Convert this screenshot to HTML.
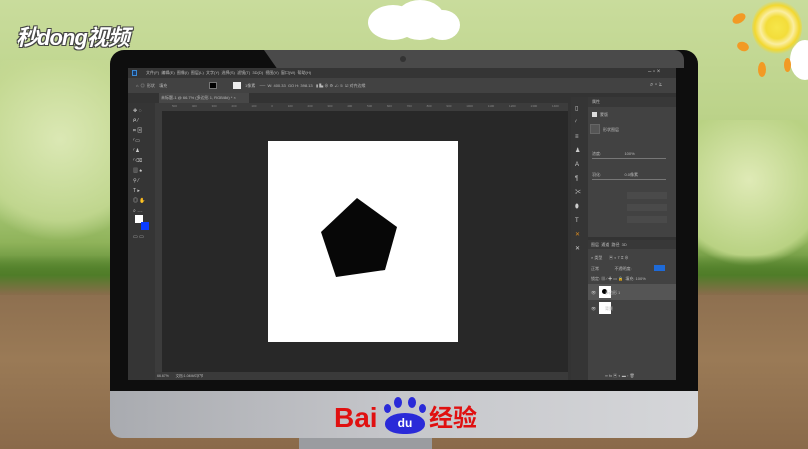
<!DOCTYPE html>
<html><head><meta charset="utf-8"><style>
*{margin:0;padding:0;box-sizing:border-box}
body{width:808px;height:449px;overflow:hidden;position:relative;font-family:"Liberation Sans","Noto Sans CJK SC",sans-serif;
background:linear-gradient(180deg,#c9dc9c 0%,#bcd38a 25%,#a9c878 45%,#8fb35a 54%,#5f8c35 60%,#8e7050 66%,#9a7a56 80%,#8a6a4a 100%)}
.a{position:absolute}
.t{color:#bbb;font-size:4px;white-space:nowrap;overflow:hidden}
</style></head><body>
<!-- bokeh -->
<div class="a" style="left:0;top:60px;width:120px;height:200px;background:radial-gradient(circle at 50% 40%,#e4eec0 0,#c6da94 60%,transparent 75%);opacity:.8"></div>
<div class="a" style="left:690px;top:120px;width:118px;height:150px;background:radial-gradient(circle at 50% 40%,#dfeab6 0,#b9d283 70%,transparent 80%)"></div>
<div class="a" style="left:0;top:255px;width:808px;height:40px;background:linear-gradient(180deg,transparent,#4f7d28 50%,#8a6c4c)"></div>
<!-- clouds -->
<div class="a" style="left:368px;top:5px;width:50px;height:35px;background:#fff;border-radius:50%"></div>
<div class="a" style="left:395px;top:0;width:50px;height:40px;background:#fff;border-radius:50%"></div>
<div class="a" style="left:425px;top:10px;width:35px;height:30px;background:#fff;border-radius:50%"></div>
<div class="a" style="left:790px;top:40px;width:30px;height:40px;background:#fff;border-radius:50%"></div>
<!-- sun -->
<div class="a" style="left:752px;top:0;width:50px;height:55px;border-radius:50%;background:radial-gradient(circle,#f6e64a 0,#f3dd3a 30%,#fbeea0 45%,#f2d830 60%,transparent 72%)"></div>
<div class="a" style="left:732px;top:14px;width:14px;height:9px;background:#f29a24;border-radius:50%;transform:rotate(-30deg)"></div>
<div class="a" style="left:737px;top:42px;width:12px;height:9px;background:#f29a24;border-radius:50%;transform:rotate(20deg)"></div>
<div class="a" style="left:758px;top:62px;width:8px;height:15px;background:#f29a24;border-radius:50%"></div>
<div class="a" style="left:784px;top:58px;width:7px;height:14px;background:#f29a24;border-radius:50%"></div>
<!-- logo -->
<div class="a" style="left:16px;top:20px;font-size:22px;font-weight:bold;font-style:italic;color:#fff;text-shadow:1px 1px 0 #444,-1px -1px 0 #444,1px -1px 0 #444,-1px 1px 0 #444;letter-spacing:-1px">秒dong视频</div>
<!-- monitor -->
<div class="a" style="left:110px;top:50px;width:588px;height:345px;background:#0e0e0e;border-radius:14px 14px 0 0"></div>
<div class="a" style="left:264px;top:50px;width:420px;height:18px;background:#4a4a4a;clip-path:polygon(0 0,100% 0,100% 100%,3% 100%);border-radius:0 10px 0 0"></div>
<div class="a" style="left:400px;top:56px;width:6px;height:6px;border-radius:50%;background:#333"></div>
<div class="a" style="left:110px;top:391px;width:588px;height:47px;background:linear-gradient(90deg,#a9abb0,#c6c7cb 50%,#d5d6d9);border-radius:0 0 12px 12px"></div>
<div class="a" style="left:299px;top:438px;width:133px;height:11px;background:#9a9ca0"></div>
<div class="a" style="left:334px;top:403px;font-size:28px;font-weight:bold;color:#e01010;line-height:30px">Bai</div>
<div class="a" style="left:385px;top:413px;width:40px;height:21px;border-radius:50% 50% 45% 45%;background:#2a2ad8;color:#fff;font-size:12px;font-weight:bold;text-align:center;line-height:21px">du</div>
<div class="a" style="left:394px;top:397px;width:8px;height:11px;border-radius:50%;background:#2a2ad8"></div>
<div class="a" style="left:408px;top:397px;width:8px;height:11px;border-radius:50%;background:#2a2ad8"></div>
<div class="a" style="left:384px;top:404px;width:7px;height:9px;border-radius:50%;background:#2a2ad8"></div>
<div class="a" style="left:419px;top:404px;width:7px;height:9px;border-radius:50%;background:#2a2ad8"></div>
<div class="a" style="left:429px;top:405px;font-size:24px;font-weight:bold;color:#e01010;line-height:28px">经验</div>
<!-- PS window -->
<div class="a" style="left:128px;top:68px;width:548px;height:312px;background:#3a3a3a"></div>
<div class="a" style="left:128px;top:68px;width:548px;height:10px;background:#353535"></div>
<div class="a" style="left:132px;top:70px;width:5px;height:6px;background:#1c3c6a;border:1px solid #3a8bd6"></div>
<div class="a t" style="left:146px;top:70px">文件(F) &nbsp;编辑(E) &nbsp;图像(I) &nbsp;图层(L) &nbsp;文字(Y) &nbsp;选择(S) &nbsp;滤镜(T) &nbsp;3D(D) &nbsp;视图(V) &nbsp;窗口(W) &nbsp;帮助(H)</div>
<div class="a t" style="left:648px;top:69px;font-size:6px">– ▫ ×</div>
<div class="a" style="left:128px;top:78px;width:548px;height:15px;background:#424242"></div>
<div class="a t" style="left:136px;top:83px">⌂ &nbsp;◎ &nbsp;形状 &nbsp;&nbsp;&nbsp;填充</div>
<div class="a" style="left:209px;top:82px;width:8px;height:7px;background:#000;border:1px solid #777"></div>
<div class="a" style="left:233px;top:82px;width:8px;height:7px;background:#eee"></div>
<div class="a t" style="left:245px;top:83px">1像素 &nbsp;&nbsp;&nbsp;── &nbsp;W: 400.33 &nbsp;GO H: 398.13 &nbsp;&nbsp;▮ ▙ ⊕ ⚙ ∠: 5 &nbsp;☑ 对齐边缘</div>
<div class="a t" style="left:650px;top:82px;font-size:6px">⌕ ▫ ⍐</div>
<div class="a" style="left:128px;top:93px;width:548px;height:287px;background:#333"></div>
<div class="a" style="left:159px;top:93px;width:90px;height:10px;background:#474747"></div>
<div class="a t" style="left:161px;top:95px">未标题-1 @ 66.7% (多边形 1, RGB/8#) * ×</div>
<!-- toolbar -->
<div class="a" style="left:128px;top:103px;width:27px;height:277px;background:#353535"></div>
<div class="a t" style="left:133px;top:106px;font-size:5px;line-height:10px;color:#ccc">✥ ◌<br>ᑭ ⁄<br>⌗ ⊠<br>⁄ ▭<br>⁄ ♟<br>⁄ ⌫<br>▥ ♠<br>⚲ ⁄<br>T ▸<br>◎ ✋<br>⌕ ⋯</div>
<div class="a" style="left:135px;top:215px;width:8px;height:8px;background:#fff"></div>
<div class="a" style="left:141px;top:222px;width:8px;height:8px;background:#0a3cff"></div>
<div class="a t" style="left:133px;top:234px;font-size:5px">▭ ▭</div>
<!-- rulers -->
<div class="a" style="left:155px;top:103px;width:413px;height:8px;background:#3c3c3c"></div>
<div class="a t" style="left:172px;top:104px;width:390px;font-size:3px;color:#888;word-spacing:14px">500 400 300 200 100 0 100 200 300 400 500 600 700 800 900 1000 1100 1200 1300 1400 1500</div>
<div class="a" style="left:155px;top:103px;width:7px;height:270px;background:#3c3c3c"></div>
<div class="a" style="left:162px;top:111px;width:406px;height:261px;background:#282828"></div>
<div class="a" style="left:268px;top:141px;width:190px;height:201px;background:#fff"></div>
<svg class="a" style="left:0;top:0" width="808" height="449"><polygon points="357,198 397,227 385,270 336,277 321,232" fill="#070707"/></svg>
<div class="a" style="left:155px;top:372px;width:413px;height:8px;background:#3a3a3a"></div>
<div class="a t" style="left:157px;top:374px;font-size:3.5px">66.67% &nbsp;&nbsp;&nbsp;&nbsp;&nbsp;&nbsp;文档:1.04M/0字节</div>
<!-- right icons column -->
<div class="a" style="left:571px;top:97px;width:17px;height:283px;background:#353535"></div>
<div class="a t" style="left:575px;top:102px;font-size:6px;line-height:14px;color:#ccc">▯<br>⁄<br>≡<br>♟<br>A<br>¶<br>✂<br>⬮<br>T<br><span style="color:#d88a20">✕</span><br>✕</div>
<!-- properties panel -->
<div class="a" style="left:588px;top:97px;width:88px;height:140px;background:#424242"></div>
<div class="a" style="left:588px;top:97px;width:88px;height:10px;background:#383838"></div>
<div class="a t" style="left:592px;top:99px">属性</div>
<div class="a" style="left:592px;top:112px;width:5px;height:5px;background:#ddd"></div>
<div class="a t" style="left:600px;top:112px">蒙版</div>
<div class="a" style="left:590px;top:124px;width:10px;height:10px;background:#555;border:1px solid #666"></div>
<div class="a t" style="left:603px;top:127px">形状图层</div>
<div class="a t" style="left:592px;top:151px">浓度: &nbsp;&nbsp;&nbsp;&nbsp;&nbsp;&nbsp;&nbsp;&nbsp;&nbsp;&nbsp;&nbsp;&nbsp;&nbsp;&nbsp;&nbsp;&nbsp;&nbsp;&nbsp;&nbsp;&nbsp;100%</div>
<div class="a" style="left:592px;top:158px;width:74px;height:1px;background:#777"></div>
<div class="a t" style="left:592px;top:172px">羽化: &nbsp;&nbsp;&nbsp;&nbsp;&nbsp;&nbsp;&nbsp;&nbsp;&nbsp;&nbsp;&nbsp;&nbsp;&nbsp;&nbsp;&nbsp;&nbsp;&nbsp;&nbsp;&nbsp;&nbsp;0.0像素</div>
<div class="a" style="left:592px;top:179px;width:74px;height:1px;background:#777"></div>
<div class="a" style="left:627px;top:192px;width:40px;height:7px;background:#4a4a4a"></div>
<div class="a" style="left:627px;top:204px;width:40px;height:7px;background:#4a4a4a"></div>
<div class="a" style="left:627px;top:216px;width:40px;height:7px;background:#4a4a4a"></div>
<!-- layers -->
<div class="a" style="left:588px;top:240px;width:88px;height:140px;background:#424242"></div>
<div class="a" style="left:588px;top:240px;width:88px;height:9px;background:#383838"></div>
<div class="a t" style="left:591px;top:242px">图层 &nbsp;通道 &nbsp;路径 &nbsp;3D</div>
<div class="a t" style="left:591px;top:255px">⌕ 类型 &nbsp;&nbsp;&nbsp;&nbsp;&nbsp;▣ ◐ T ⌗ ⊕</div>
<div class="a t" style="left:591px;top:266px">正常 &nbsp;&nbsp;&nbsp;&nbsp;&nbsp;&nbsp;&nbsp;&nbsp;&nbsp;&nbsp;&nbsp;&nbsp;&nbsp;不透明度:</div>
<div class="a" style="left:654px;top:265px;width:11px;height:6px;background:#1e6ad8"></div>
<div class="a t" style="left:591px;top:276px">锁定: ▦ ⁄ ✚ ▭ 🔒 &nbsp;填充: 100%</div>
<div class="a" style="left:588px;top:284px;width:88px;height:16px;background:#555"></div>
<div class="a" style="left:599px;top:286px;width:12px;height:12px;background:#fff"></div>
<div class="a" style="left:602px;top:289px;width:5px;height:5px;border-radius:50%;background:#000"></div>
<div class="a t" style="left:591px;top:290px">👁 &nbsp;&nbsp;&nbsp;&nbsp;&nbsp;&nbsp;&nbsp;多边形 1</div>
<div class="a" style="left:599px;top:302px;width:12px;height:12px;background:#fff"></div>
<div class="a t" style="left:591px;top:306px">👁 &nbsp;&nbsp;&nbsp;&nbsp;&nbsp;&nbsp;&nbsp;背景</div>
<div class="a t" style="left:605px;top:373px">∞ fx ▣ ◐ ▬ ▫ 🗑</div>
</body></html>
